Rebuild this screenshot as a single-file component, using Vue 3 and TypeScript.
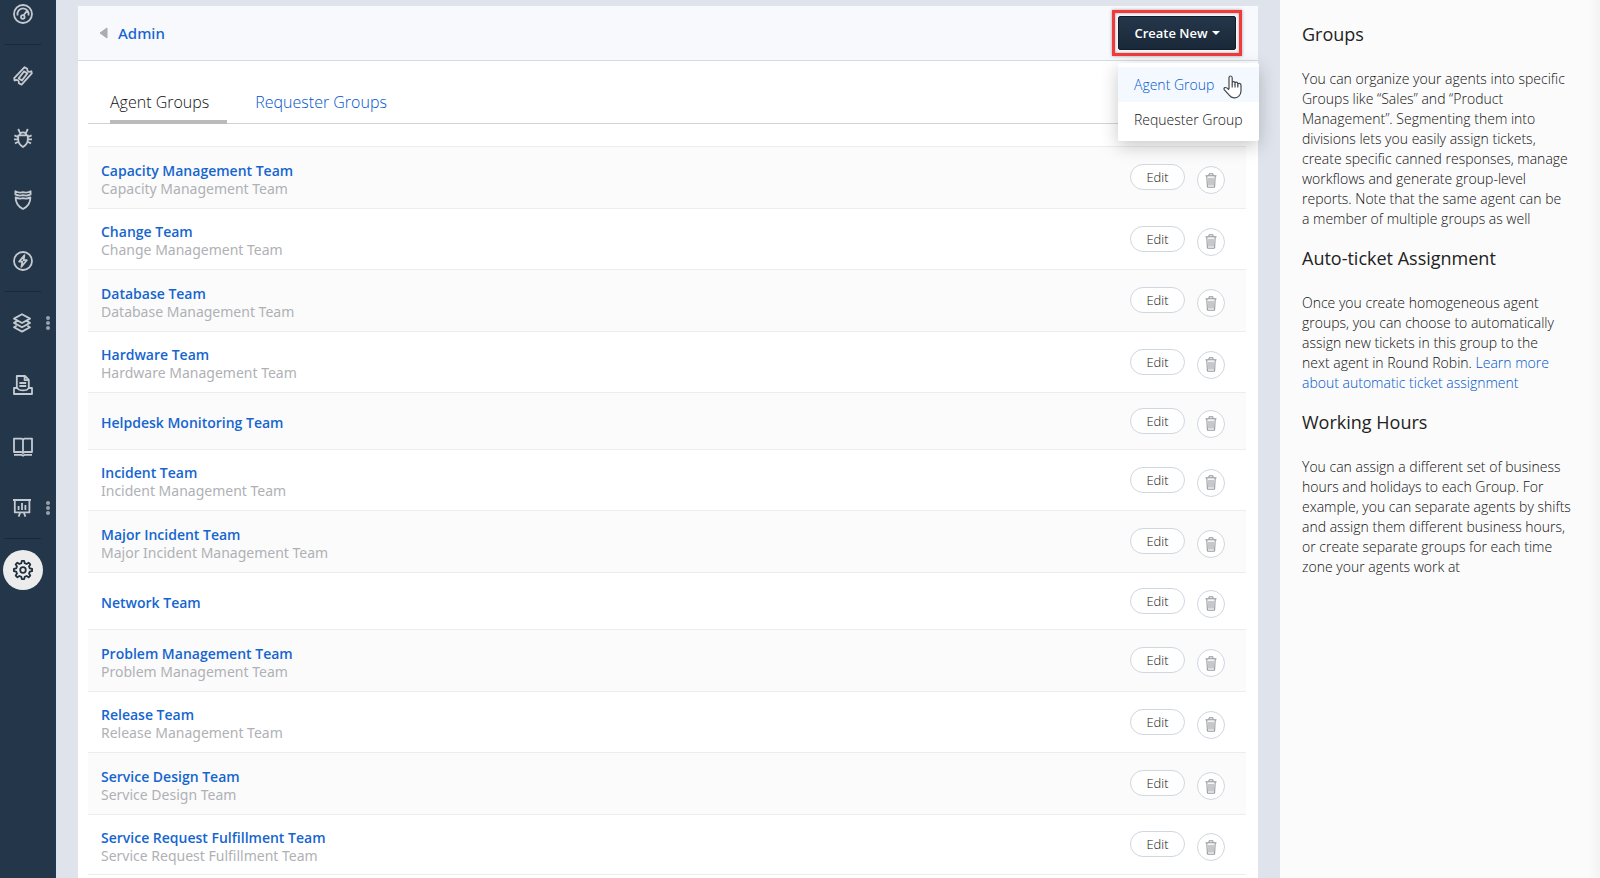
<script setup lang="ts">
import { ref } from 'vue'

interface NavItem {
  id: string
  label: string
  more?: boolean
}

interface Group {
  name: string
  description?: string
}

const navGroups: NavItem[][] = [
  [{ id: 'dashboard', label: 'Dashboard' }],
  [
    { id: 'tickets', label: 'Tickets' },
    { id: 'problems', label: 'Problems' },
    { id: 'changes', label: 'Changes' },
    { id: 'releases', label: 'Releases' },
  ],
  [
    { id: 'assets', label: 'Assets', more: true },
    { id: 'contracts', label: 'Contracts' },
    { id: 'solutions', label: 'Solutions' },
    { id: 'reports', label: 'Reports', more: true },
  ],
  [{ id: 'admin', label: 'Admin' }],
]

const groups: Group[] = [
  { name: 'Capacity Management Team', description: 'Capacity Management Team' },
  { name: 'Change Team', description: 'Change Management Team' },
  { name: 'Database Team', description: 'Database Management Team' },
  { name: 'Hardware Team', description: 'Hardware Management Team' },
  { name: 'Helpdesk Monitoring Team' },
  { name: 'Incident Team', description: 'Incident Management Team' },
  { name: 'Major Incident Team', description: 'Major Incident Management Team' },
  { name: 'Network Team' },
  { name: 'Problem Management Team', description: 'Problem Management Team' },
  { name: 'Release Team', description: 'Release Management Team' },
  { name: 'Service Design Team', description: 'Service Design Team' },
  { name: 'Service Request Fulfillment Team', description: 'Service Request Fulfillment Team' },
]

const menuOpen = ref(true)
</script>

<template>
  <div class="page">
    <nav class="sidebar" aria-label="Main">
      <ul v-for="(items, i) in navGroups" :key="i" class="nav-group">
        <li v-for="item in items" :key="item.id" class="nav-item">
          <a href="#" class="nav-link" :class="{ active: item.id === 'admin' }" :aria-label="item.label">
            <svg class="nav-icon" viewBox="0 0 20 20" aria-hidden="true">
              <g v-if="item.id === 'dashboard'">
                <circle cx="10" cy="10" r="9" />
                <path d="M4.6 11.5A5.6 5.6 0 1 1 15.4 11.5M10.6 11.2L13.6 7.2" />
                <circle cx="9.8" cy="13" r="1.8" />
              </g>
              <g v-else-if="item.id === 'tickets'">
                <path d="M11.6 1.2L14.2 2.8Q14 5 15.4 5.6Q16.8 6.2 18.4 5.2L18.8 7.4L8.6 18.6L5.8 17.2Q6.2 15 4.8 14.3Q3.2 13.6 1.6 14.6L1.2 12.2Z" />
                <path d="M11 5.4L14.4 7.4L9 14.4L5.6 12.4Z" />
              </g>
              <g v-else-if="item.id === 'problems'">
                <path d="M5.2 7.4H14.8V11.5Q14.8 16 10 19Q5.2 16 5.2 11.5ZM6.8 7.2Q6.8 4.4 10 4.4Q13.2 4.4 13.2 7.2M7 4.8L5.2 1M13 4.8L14.8 1M5 9L1.4 7.4M15 9L18.6 7.4M5 11.4H1M15 11.4H19M5.6 13.4L2 15.6M14.4 13.4L18 15.6" />
              </g>
              <g v-else-if="item.id === 'changes'">
                <path d="M2.4 1.2Q6 3.2 10 2.2Q14 3.2 17.6 1.2V4.4Q14 6.4 10 5.2Q6 6.4 2.4 4.4ZM2.6 7.4Q6 9.2 10 8.2Q14 9.2 17.4 7.4Q17.4 15 10 19Q2.6 15 2.6 7.4Z" />
              </g>
              <g v-else-if="item.id === 'releases'">
                <circle cx="10" cy="10" r="9" />
                <path d="M11.4 4.2L6.2 10.6H9.4L8.4 15.8L13.8 9.2H10.6Z" />
              </g>
              <g v-else-if="item.id === 'assets'">
                <path d="M9 1.2L17 5.6L9 10L1 5.6ZM3.6 8.4L1 9.9L9 14.3L17 9.9L14.4 8.4M3.6 12.7L1 14.2L9 18.6L17 14.2L14.4 12.7" />
              </g>
              <g v-else-if="item.id === 'contracts'">
                <path d="M3.8 12.4V1H12L15.8 4.8V12.4M11.6 1.2V5.2H15.6M6.4 8H13.2M6.4 11H13.2M1 13H4.4Q5.4 15.4 10 15.4Q14.6 15.4 15.6 13H19V19H1Z" />
              </g>
              <g v-else-if="item.id === 'solutions'">
                <path d="M1 1.6H8.4L10 2.6L11.6 1.6H19V15H11.6L10 16L8.4 15H1ZM10 2.6V15.6M1 17.8H8.2L10 18.8L11.8 17.8H19" />
              </g>
              <g v-else-if="item.id === 'reports'">
                <path d="M0 2H18M1.8 2V14.4H16.4V2M5.6 8V12M9 5V12M12.4 7V12M7 15L5.6 18.6M11 15L12.4 18.6" />
              </g>
              <g v-else>
                <path d="M8.3 3.2L8.8 .9H11.2L11.7 3.2L13.6 4L15.6 2.7L17.3 4.4L16 6.4L16.8 8.3L19.1 8.8V11.2L16.8 11.7L16 13.6L17.3 15.6L15.6 17.3L13.6 16L11.7 16.8L11.2 19.1H8.8L8.3 16.8L6.4 16L4.4 17.3L2.7 15.6L4 13.6L3.2 11.7L.9 11.2V8.8L3.2 8.3L4 6.4L2.7 4.4L4.4 2.7L6.4 4Z" />
                <circle cx="10" cy="10" r="2.8" />
              </g>
            </svg>
          </a>
          <button v-if="item.more" type="button" class="more" :aria-label="`More ${item.label}`">
            <svg viewBox="0 0 4 16" aria-hidden="true">
              <circle cx="2" cy="3" r="2" />
              <circle cx="2" cy="8" r="2" />
              <circle cx="2" cy="13" r="2" />
            </svg>
          </button>
        </li>
      </ul>
    </nav>

    <main class="main">
      <section class="card">
        <header class="card-head">
          <a href="#" class="back">
            <svg class="back-icon" viewBox="0 0 9 12" aria-hidden="true"><path d="M8 1V11L1 6Z" /></svg>
            Admin
          </a>
          <div class="create">
            <button type="button" class="create-btn" :aria-expanded="menuOpen" @click="menuOpen = !menuOpen">
              Create New
              <svg class="caret" viewBox="0 0 8 4" aria-hidden="true"><path d="M0 0H8L4 4Z" /></svg>
            </button>
            <div v-if="menuOpen" class="menu">
              <a href="#" class="menu-item hovered">Agent Group</a>
              <a href="#" class="menu-item">Requester Group</a>
              <svg class="pointer" viewBox="0 0 20 24" aria-hidden="true">
                <path d="M6 14V3Q6 1 7.6 1Q9.2 1 9.2 3V9.4V7.8Q9.2 6.6 10.6 6.6Q12 6.6 12 8V10V8.4Q12 7.2 13.3 7.2Q14.8 7.2 14.8 8.8V10.4V9.4Q14.8 8.4 16.2 8.4Q18 8.4 18 10.4V16Q18 19 15.6 21.4Q13.6 23 11 22.8Q8 22.6 6.4 20.4L1.2 14.6Q.6 13.2 1.8 12.6Q3.4 12 6 14.8" />
                <path d="M9.2 9V12.5M12 9.5V12.5M14.8 10V12.5" />
              </svg>
            </div>
          </div>
        </header>

        <nav class="tabs" aria-label="Group type">
          <a href="#" class="tab current" aria-current="page">Agent Groups</a>
          <a href="#" class="tab">Requester Groups</a>
        </nav>

        <ul class="list">
          <li v-for="group in groups" :key="group.name" class="row" :class="{ compact: !group.description }">
            <div class="info">
              <a href="#" class="name">{{ group.name }}</a>
              <p v-if="group.description" class="desc">{{ group.description }}</p>
            </div>
            <div class="actions">
              <button type="button" class="edit">Edit</button>
              <button type="button" class="trash" :aria-label="`Delete ${group.name}`">
                <svg viewBox="0 0 12 15" aria-hidden="true">
                  <path d="M.5 2.8H11.5M4 2.6V.8H8V2.6M1.8 3L2.4 14.2H9.6L10.2 3M4 4.8V12.6M6 4.8V12.6M8 4.8V12.6" />
                </svg>
              </button>
            </div>
          </li>
        </ul>
      </section>
    </main>

    <aside class="help">
      <h2>Groups</h2>
      <p>
        You can organize your agents into specific Groups like “Sales” and “Product Management”.
        Segmenting them into divisions lets you easily assign tickets, create specific canned
        responses, manage workflows and generate group-level reports. Note that the same agent can
        be a member of multiple groups as well
      </p>
      <h2>Auto-ticket Assignment</h2>
      <p>
        Once you create homogeneous agent groups, you can choose to automatically assign new tickets
        in this group to the next&nbsp;agent in Round Robin.
        <a href="#">Learn more about automatic ticket assignment</a>
      </p>
      <h2>Working Hours</h2>
      <p>
        You can assign a different set of business hours and holidays to each Group. For example,
        you can separate agents by shifts and assign them different business hours, or create
        separate groups for each time zone your agents work at
      </p>
    </aside>
  </div>
</template>

<style>
body {
  margin: 0;
  background: #dfe4ec;
}
</style>

<style scoped>
.page {
  display: flex;
  min-height: 100vh;
  font-family: "Open Sans", "Noto Sans", sans-serif;
  font-size: 14px;
  font-weight: 300;
  color: #111;
}

a {
  color: #0055cc;
  text-decoration: none;
}

button {
  padding: 0;
  border: 0;
  background: none;
  font: inherit;
  color: inherit;
}

ul,
p,
h2 {
  margin: 0;
  padding: 0;
  list-style: none;
}

.sidebar {
  flex: none;
  box-sizing: border-box;
  width: 56px;
  padding: 0 14px 0 4px;
  background: #24364a;
  border-right: 1px solid #1b3b56;
  overflow: hidden;
}

.nav-group {
  border-bottom: 1px solid #1a2938;
}

.nav-group:first-child {
  margin-top: -16px;
}

.nav-group:last-child {
  border-bottom: 0;
}

.nav-item {
  position: relative;
  display: flex;
  align-items: center;
  justify-content: center;
  height: 62px;
}

.nav-group:not(:last-child) .nav-item:last-child {
  height: 60px;
}

.nav-link {
  display: flex;
  flex: none;
  align-items: center;
  justify-content: center;
  width: 40px;
  height: 40px;
  border-radius: 50%;
  color: #c5cad0;
}

.nav-link.active {
  background: #ececec;
  color: #20303f;
}

.nav-icon {
  width: 20px;
  height: 20px;
  overflow: visible;
  fill: none;
  stroke: currentColor;
  stroke-width: 1.8;
  stroke-linejoin: round;
}

.more {
  position: absolute;
  left: 42px;
  width: 4px;
  height: 16px;
}

.more svg {
  display: block;
  fill: #9aa3ad;
}

.main {
  display: flex;
  flex: 1;
  padding: 6px 22px 0;
}

.card {
  flex: 1;
  background: #fff;
  border-radius: 2px 2px 0 0;
}

.card-head {
  display: flex;
  align-items: center;
  justify-content: space-between;
  box-sizing: border-box;
  height: 55px;
  padding: 0 22px 0 21px;
  background: #f8f9fc;
  border-bottom: 1px solid #d3dbe2;
}

.back {
  display: flex;
  align-items: center;
  gap: 10px;
  color: #1565cf;
  font-family: "Noto Sans", "Open Sans", sans-serif;
  font-size: 15px;
  font-weight: 500;
}

.back-icon {
  width: 9px;
  height: 12px;
  fill: #a9acb1;
  stroke: #a9acb1;
  stroke-linejoin: round;
}

.create {
  position: relative;
}

.create-btn {
  display: flex;
  align-items: center;
  justify-content: center;
  gap: 4px;
  width: 118px;
  height: 34px;
  border: 1px solid #101c29;
  border-radius: 2px;
  background: linear-gradient(#24364a, #1a2939);
  font-size: 13px;
  font-weight: 600;
  color: #fff;
}

.create::before {
  content: "";
  position: absolute;
  inset: -6px;
  border: 3px solid #f23a3a;
  box-shadow: 0 0 3px rgba(0, 0, 0, 0.35), inset 0 0 3px rgba(0, 0, 0, 0.35);
  pointer-events: none;
}

.caret {
  width: 8px;
  height: 4px;
  fill: #fff;
}

.menu {
  position: absolute;
  top: 47px;
  left: 0;
  z-index: 1;
  box-sizing: border-box;
  width: 141px;
  padding: 4px 0;
  border-radius: 2px;
  background: #fff;
  box-shadow: 0 5px 18px rgba(0, 0, 0, 0.22);
}

.menu-item {
  display: block;
  padding-left: 16px;
  font-size: 14px;
  line-height: 35px;
  color: #111;
}

.menu-item.hovered {
  background: #f4f9ff;
  color: #0055cc;
}

.pointer {
  position: absolute;
  top: 12px;
  left: 105px;
  width: 20px;
  height: 24px;
  fill: #fff;
  stroke: #44484e;
  stroke-width: 1.2;
}

.tabs {
  display: flex;
  gap: 28px;
  margin: 23px 12px 0 10px;
  padding-left: 22px;
  border-bottom: 1px solid #d0d4d8;
}

.tab {
  box-sizing: border-box;
  height: 40px;
  margin-bottom: -1px;
  padding-right: 18px;
  font-size: 16px;
  line-height: 36px;
}

.tab.current {
  border-bottom: 4px solid #bbb;
  color: #111;
}

.list {
  margin: 22px 12px 0 10px;
}

.row {
  display: flex;
  align-items: center;
  justify-content: space-between;
  box-sizing: border-box;
  height: 61px;
  padding: 3px 21px 0 13px;
  border-top: 1px solid #ededee;
}

.row:nth-child(odd) {
  height: 62px;
  background: #fbfbfb;
}

.row.compact {
  height: 57px;
}

.row:last-child {
  border-bottom: 1px solid #ededee;
}

.info {
  font-size: 14px;
  line-height: 18px;
}

.name {
  display: block;
  color: #1565cf;
  font-weight: 600;
}

.desc {
  color: #afb1b5;
  font-family: "Noto Sans", "Open Sans", sans-serif;
  font-weight: 400;
  line-height: 17px;
}

.actions {
  display: flex;
  gap: 12px;
}

.edit {
  width: 55px;
  height: 26px;
  border: 1px solid #cfd7df;
  border-radius: 13px;
  background: #fff;
  font-size: 13px;
  color: #111;
}

.trash {
  display: flex;
  align-items: center;
  justify-content: center;
  width: 28px;
  height: 28px;
  margin-top: 2px;
  border: 1px solid #cfd7df;
  border-radius: 50%;
  background: #fff;
}

.trash svg {
  width: 12px;
  height: 15px;
  fill: none;
  stroke: #8d9096;
}

.help {
  flex: none;
  box-sizing: border-box;
  width: 320px;
  padding: 22px 28px 22px 22px;
  background: linear-gradient(to left, #f3f3f3, #fbfbfb 12px);
}

.help h2 {
  margin-bottom: 23px;
  font-size: 18px;
  font-weight: 400;
  line-height: 24px;
  color: #222;
}

.help p {
  margin-bottom: 17px;
  font-size: 14px;
  line-height: 20px;
}
</style>
